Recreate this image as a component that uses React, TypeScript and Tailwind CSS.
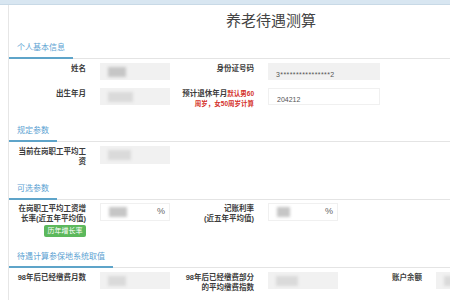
import type { ReactNode } from "react";

const font = { fontFamily: '"Liberation Sans", "Noto Sans CJK SC", sans-serif' };

function SectionHeader({ title, className }: { title: string; className: string }) {
  return (
    <div className={`flex border-b border-[#e4e4e4] ${className}`}>
      <div className="-mb-px border-b-2 border-[#5ea4c9] px-[8px] pb-[4px] text-[8px] leading-[10px] text-[#5ca2d2]">
        {title}
      </div>
    </div>
  );
}

function Blob({ w = 18, light = false }: { w?: number; light?: boolean }) {
  return (
    <div
      className={`h-[10px] blur-[1.5px] ${light ? "bg-[#dadada]" : "bg-[#c6c6c6]"}`}
      style={{ width: w }}
    />
  );
}

function Field({
  children,
  grey = true,
  wide = false,
  pct = false,
  h = "h-[17px]",
}: {
  children?: ReactNode;
  grey?: boolean;
  wide?: boolean;
  pct?: boolean;
  h?: string;
}) {
  return (
    <div
      className={`ml-[14px] flex shrink-0 items-center pl-[8px] pr-[4px] ${h} ${wide ? "w-[112px]" : "w-[70px]"} ${
        grey ? "bg-[#f1f1f1]" : "border border-[#f0f0f0] bg-white"
      }`}
    >
      <div className="flex-1">{children}</div>
      {pct ? <span className="text-[9px] text-[#666]">%</span> : null}
    </div>
  );
}

function Col({ label, children }: { label: ReactNode; children: ReactNode }) {
  return (
    <div className="flex w-[168px] shrink-0 items-start">
      <div className="w-[77px] shrink-0 pt-px text-right text-[7.5px] font-bold leading-[10px] text-[#3c3c3c]">
        {label}
      </div>
      {children}
    </div>
  );
}

export default function App() {
  return (
    <div className="h-[300px] w-[450px] overflow-hidden bg-white" style={font}>
      <div className="h-[5px] border-b border-[#c8d9e6] bg-[#d8e6f1]" />
      <div className="ml-[8px] h-[295px] border-l border-[#e6e6e6]">
        <div className="flex h-[30px] items-center pl-[217px] text-[15px] leading-[15px] text-[#444]">
          养老待遇测算
        </div>

        <SectionHeader title="个人基本信息" className="pt-[8px]" />
        <div className="mt-[4px] flex flex-col gap-[8px]">
          <div className="flex">
            <Col label="姓名">
              <Field>
                <Blob />
              </Field>
            </Col>
            <Col label="身份证号码">
              <Field wide>
                <span className="text-[7px] tracking-[0.4px] text-[#555]">3****************2</span>
              </Field>
            </Col>
          </div>
          <div className="flex">
            <Col label="出生年月">
              <Field>
                <Blob w={25} light />
              </Field>
            </Col>
            <Col
              label={
                <>
                  预计退休年月<span className="text-[6.5px] text-[#d4302a]">默认男60</span>
                  <br />
                  <span className="text-[6.5px] text-[#d4302a]">周岁，女50周岁计算</span>
                </>
              }
            >
              <Field wide grey={false}>
                <span className="text-[7px] text-[#555]">204212</span>
              </Field>
            </Col>
          </div>
        </div>

        <SectionHeader title="规定参数" className="pt-[17px]" />
        <div className="mt-[4px] flex">
          <Col
            label={
              <>
                当前在岗职工平均工
                <br />资
              </>
            }
          >
            <Field h="h-[18px]">
              <Blob w={23} light />
            </Field>
          </Col>
        </div>

        <SectionHeader title="可选参数" className="pt-[17px]" />
        <div className="mt-[3px] flex">
          <div className="flex w-[168px] shrink-0 items-start">
            <div className="flex w-[77px] shrink-0 flex-col items-end">
              <div className="pt-px text-right text-[7.5px] font-bold leading-[10px] text-[#3c3c3c]">
                在岗职工平均工资增
                <br />
                长率(近五年平均值)
              </div>
              <div className="mt-[1px] flex h-[12px] w-[42px] items-center justify-center rounded-[2px] bg-[#5cb85c] text-[7px] text-white">
                历年增长率
              </div>
            </div>
            <Field grey={false} pct h="h-[18px]">
              <Blob />
            </Field>
          </div>
          <Col
            label={
              <>
                记账利率
                <br />
                (近五年平均值)
              </>
            }
          >
            <Field grey={false} pct h="h-[18px]">
              <Blob w={13} />
            </Field>
          </Col>
        </div>

        <SectionHeader title="待遇计算参保地系统取值" className="pt-[15px]" />
        <div className="mt-[4px] flex flex-col gap-[8px]">
          <div className="flex">
            <Col label="98年后已经缴费月数">
              <Field>
                <Blob light />
              </Field>
            </Col>
            <Col
              label={
                <>
                  98年后已经缴费部分
                  <br />
                  的平均缴费指数
                </>
              }
            >
              <Field>
                <Blob w={22} light />
              </Field>
            </Col>
            <Col label="账户余额">
              <Field>
                <Blob light />
              </Field>
            </Col>
          </div>
          <div className="flex">
            <Col label="98年前视同缴费月数">
              <Field>
                <Blob light />
              </Field>
            </Col>
            <Col label="视同缴费指数">
              <Field>
                <Blob light />
              </Field>
            </Col>
          </div>
        </div>
      </div>
    </div>
  );
}
